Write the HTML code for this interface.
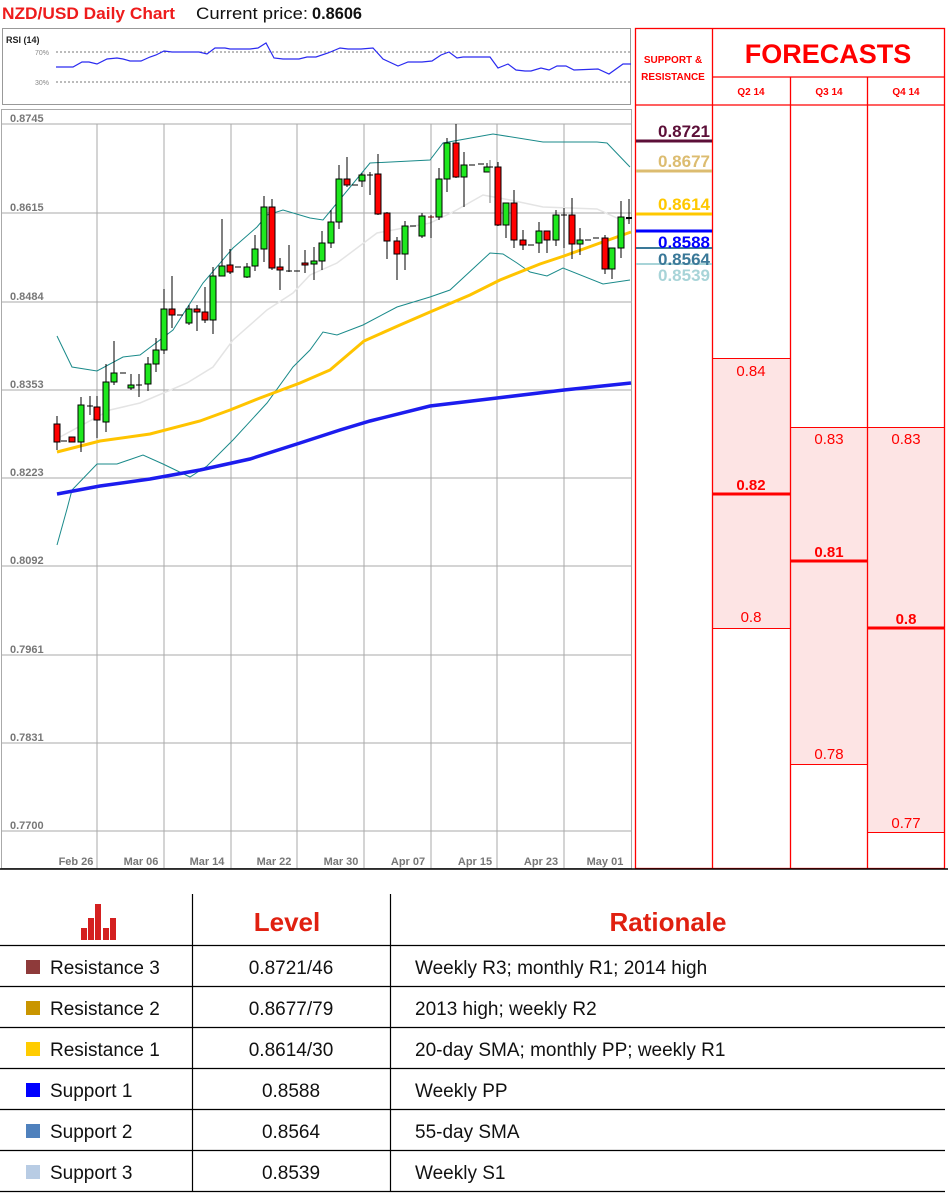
<!DOCTYPE html>
<html><head><meta charset="utf-8"><style>
html,body{margin:0;padding:0;background:#fff}
svg{display:block}
text{font-family:"Liberation Sans",sans-serif}
</style></head><body>
<svg width="948" height="1196" viewBox="0 0 948 1196" xmlns="http://www.w3.org/2000/svg">
<!-- Title -->
<text x="2" y="19" font-size="17" font-weight="bold" fill="#ee1c1c" textLength="173" lengthAdjust="spacingAndGlyphs">NZD/USD Daily Chart</text>
<text x="196" y="19" font-size="17" fill="#111" textLength="112" lengthAdjust="spacingAndGlyphs">Current price:</text>
<text x="312" y="19" font-size="17" font-weight="bold" fill="#111" textLength="50" lengthAdjust="spacingAndGlyphs">0.8606</text>

<!-- RSI box -->
<rect x="2.5" y="28.5" width="628" height="76" fill="#fff" stroke="#999"/>
<text x="6" y="43" font-size="9" font-weight="bold" fill="#222">RSI (14)</text>
<line x1="56" y1="52" x2="630" y2="52" stroke="#777" stroke-dasharray="2,2"/>
<line x1="56" y1="82" x2="630" y2="82" stroke="#777" stroke-dasharray="2,2"/>
<text x="35" y="55" font-size="7" fill="#888">70%</text>
<text x="35" y="85" font-size="7" fill="#888">30%</text>
<polyline fill="none" stroke="#2a2af0" stroke-width="1.2" points="56,67 73,67 82,62 89,62 97,64 107,59 117,58 123,59 130,61 141,61 150,57 156,55 164,51 172,52 189,52 199,52 207,54 215,48 225,48 230,49 250,49 258,48 266,43 274,58 283,59 299,59 307,57 316,57 328,53 340,48 348,49 361,49 373,48 383,59 398,66 408,62 422,62 432,61 441,55 449,52 457,58 463,57 490,57 498,68 508,64 516,70 525,71 531,71 541,68 549,70 557,66 566,66 574,70 598,69 609,74 623,64 631,64"/>

<!-- Main chart -->
<rect x="1.5" y="109.5" width="630" height="759" fill="#fff" stroke="#aaa"/>
<g stroke="#aaa" stroke-width="1">
<line x1="2" y1="124" x2="631" y2="124"/><line x1="2" y1="213" x2="631" y2="213"/><line x1="2" y1="302" x2="631" y2="302"/><line x1="2" y1="390" x2="631" y2="390"/><line x1="2" y1="478" x2="631" y2="478"/><line x1="2" y1="566" x2="631" y2="566"/><line x1="2" y1="655" x2="631" y2="655"/><line x1="2" y1="743" x2="631" y2="743"/><line x1="2" y1="831" x2="631" y2="831"/>
<line x1="97" y1="124" x2="97" y2="868"/><line x1="164" y1="124" x2="164" y2="868"/><line x1="231" y1="124" x2="231" y2="868"/><line x1="297" y1="124" x2="297" y2="868"/><line x1="364" y1="124" x2="364" y2="868"/><line x1="431" y1="124" x2="431" y2="868"/><line x1="497" y1="124" x2="497" y2="868"/><line x1="564" y1="124" x2="564" y2="868"/>
</g>
<g font-size="11" font-weight="bold" fill="#777">
<text x="10" y="122">0.8745</text><text x="10" y="211">0.8615</text><text x="10" y="300">0.8484</text><text x="10" y="388">0.8353</text><text x="10" y="476">0.8223</text><text x="10" y="564">0.8092</text><text x="10" y="653">0.7961</text><text x="10" y="741">0.7831</text><text x="10" y="829">0.7700</text>
</g>
<g font-size="11" font-weight="bold" fill="#777" text-anchor="middle">
<text x="76" y="865">Feb 26</text><text x="141" y="865">Mar 06</text><text x="207" y="865">Mar 14</text><text x="274" y="865">Mar 22</text><text x="341" y="865">Mar 30</text><text x="408" y="865">Apr 07</text><text x="475" y="865">Apr 15</text><text x="541" y="865">Apr 23</text><text x="605" y="865">May 01</text>
</g>

<!-- Indicators -->
<polyline fill="none" stroke="#e4e4e4" stroke-width="1.5" points="60,437 110,410 140,403 187,383 213,367 233,340 267,310 293,293 310,275 337,263 377,233 430,223 453,212 483,195 510,200 543,207 597,209 617,218 630,220"/>
<polyline fill="none" stroke="#1a8a8a" stroke-width="1" points="57,336 72,367 97,371 123,357 140,355 173,330 203,283 233,248 257,227 267,215 283,210 310,218 323,220 370,163 430,160 443,143 493,134 543,142 597,142 607,143 630,167"/>
<polyline fill="none" stroke="#1a8a8a" stroke-width="1" points="57,545 67,509 72,490 97,464 117,464 143,455 163,464 190,477 207,466 233,440 267,403 293,367 310,350 323,332 337,335 363,325 397,307 430,297 450,290 490,253 503,254 517,263 530,272 547,276 563,268 603,284 630,280"/>
<polyline fill="none" stroke="#ffc400" stroke-width="3" points="57,452 100,441 150,434 200,421 230,410 260,398 300,383 330,370 364,341 400,325 430,312 470,295 500,280 540,264 564,256 600,243 631,232"/>
<polyline fill="none" stroke="#1c1cee" stroke-width="3.5" points="57,494 100,486 150,479 200,470 250,459 300,443 340,430 370,421 430,406 497,398 564,390 631,383"/>

<!-- Candles -->
<g stroke="#000" stroke-width="1">
<line x1="57" y1="416" x2="57" y2="450"/><rect x="54" y="424" width="6" height="18" fill="#f00"/>
<line x1="61" y1="441" x2="67" y2="441"/>
<rect x="69" y="437" width="6" height="5" fill="#f00"/>
<line x1="81" y1="397" x2="81" y2="452"/><rect x="78" y="405" width="6" height="37" fill="#1ee81e"/>
<line x1="90" y1="396" x2="90" y2="415"/><line x1="87" y1="406" x2="93" y2="406"/>
<line x1="97" y1="396" x2="97" y2="438"/><rect x="94" y="407" width="6" height="13" fill="#f00"/>
<line x1="106" y1="364" x2="106" y2="432"/><rect x="103" y="382" width="6" height="40" fill="#1ee81e"/>
<line x1="114" y1="341" x2="114" y2="385"/><rect x="111" y="373" width="6" height="9" fill="#1ee81e"/>
<line x1="120" y1="373" x2="126" y2="373"/>
<line x1="131" y1="374" x2="131" y2="390"/><rect x="128" y="385" width="6" height="3" fill="#1ee81e"/>
<line x1="139" y1="374" x2="139" y2="397"/><line x1="136" y1="385" x2="142" y2="385"/>
<line x1="148" y1="357" x2="148" y2="391"/><rect x="145" y="364" width="6" height="20" fill="#1ee81e"/>
<line x1="156" y1="338" x2="156" y2="372"/><rect x="153" y="350" width="6" height="14" fill="#1ee81e"/>
<line x1="164" y1="289" x2="164" y2="354"/><rect x="161" y="309" width="6" height="41" fill="#1ee81e"/>
<line x1="172" y1="276" x2="172" y2="328"/><rect x="169" y="309" width="6" height="6" fill="#f00"/>
<line x1="177" y1="315" x2="183" y2="315"/>
<line x1="189" y1="305" x2="189" y2="325"/><rect x="186" y="309" width="6" height="14" fill="#1ee81e"/>
<line x1="197" y1="305" x2="197" y2="331"/><rect x="194" y="309" width="6" height="3" fill="#f00"/>
<line x1="205" y1="287" x2="205" y2="323"/><rect x="202" y="312" width="6" height="8" fill="#f00"/>
<line x1="213" y1="267" x2="213" y2="334"/><rect x="210" y="276" width="6" height="44" fill="#1ee81e"/>
<line x1="222" y1="219" x2="222" y2="276"/><rect x="219" y="266" width="6" height="10" fill="#1ee81e"/>
<line x1="230" y1="249" x2="230" y2="274"/><rect x="227" y="265" width="6" height="7" fill="#f00"/>
<line x1="235" y1="267" x2="241" y2="267"/>
<line x1="247" y1="263" x2="247" y2="278"/><rect x="244" y="267" width="6" height="10" fill="#1ee81e"/>
<line x1="255" y1="235" x2="255" y2="271"/><rect x="252" y="249" width="6" height="17" fill="#1ee81e"/>
<line x1="264" y1="196" x2="264" y2="262"/><rect x="261" y="207" width="6" height="42" fill="#1ee81e"/>
<line x1="272" y1="199" x2="272" y2="270"/><rect x="269" y="207" width="6" height="61" fill="#f00"/>
<line x1="280" y1="258" x2="280" y2="290"/><rect x="277" y="267" width="6" height="3" fill="#f00"/>
<line x1="289" y1="245" x2="289" y2="272"/><line x1="286" y1="271" x2="292" y2="271"/>
<line x1="294" y1="271" x2="300" y2="271"/>
<line x1="305" y1="250" x2="305" y2="273"/><rect x="302" y="263" width="6" height="2" fill="#f00"/>
<line x1="314" y1="247" x2="314" y2="280"/><rect x="311" y="261" width="6" height="3" fill="#1ee81e"/>
<line x1="322" y1="231" x2="322" y2="270"/><rect x="319" y="243" width="6" height="18" fill="#1ee81e"/>
<line x1="331" y1="210" x2="331" y2="248"/><rect x="328" y="222" width="6" height="21" fill="#1ee81e"/>
<line x1="339" y1="165" x2="339" y2="229"/><rect x="336" y="179" width="6" height="43" fill="#1ee81e"/>
<line x1="347" y1="157" x2="347" y2="187"/><rect x="344" y="179" width="6" height="6" fill="#f00"/>
<line x1="352" y1="185" x2="358" y2="185"/>
<line x1="362" y1="173" x2="362" y2="187"/><rect x="359" y="175" width="6" height="6" fill="#1ee81e"/>
<line x1="370" y1="172" x2="370" y2="195"/><line x1="367" y1="175" x2="373" y2="175"/>
<line x1="378" y1="154" x2="378" y2="215"/><rect x="375" y="174" width="6" height="40" fill="#f00"/>
<line x1="387" y1="212" x2="387" y2="259"/><rect x="384" y="213" width="6" height="28" fill="#f00"/>
<line x1="397" y1="237" x2="397" y2="280"/><rect x="394" y="241" width="6" height="13" fill="#f00"/>
<line x1="405" y1="221" x2="405" y2="270"/><rect x="402" y="226" width="6" height="28" fill="#1ee81e"/>
<line x1="410" y1="226" x2="416" y2="226"/>
<line x1="422" y1="213" x2="422" y2="238"/><rect x="419" y="216" width="6" height="20" fill="#1ee81e"/>
<line x1="431" y1="215" x2="431" y2="238"/><line x1="428" y1="217" x2="434" y2="217" stroke="#700"/>
<line x1="439" y1="168" x2="439" y2="220"/><rect x="436" y="179" width="6" height="38" fill="#1ee81e"/>
<line x1="447" y1="138" x2="447" y2="192"/><rect x="444" y="143" width="6" height="36" fill="#1ee81e"/>
<line x1="456" y1="124" x2="456" y2="178"/><rect x="453" y="143" width="6" height="34" fill="#f00"/>
<line x1="464" y1="152" x2="464" y2="207"/><rect x="461" y="165" width="6" height="12" fill="#1ee81e"/>
<line x1="469" y1="165" x2="475" y2="165"/>
<line x1="478" y1="164" x2="484" y2="164"/>
<line x1="487" y1="163" x2="487" y2="172"/><rect x="484" y="167" width="6" height="5" fill="#1ee81e"/>
<line x1="490" y1="160" x2="490" y2="203" stroke="#777"/><line x1="487" y1="167" x2="493" y2="167"/>
<line x1="498" y1="162" x2="498" y2="226"/><rect x="495" y="167" width="6" height="58" fill="#f00"/>
<line x1="506" y1="203" x2="506" y2="238"/><rect x="503" y="203" width="6" height="22" fill="#1ee81e"/>
<line x1="514" y1="190" x2="514" y2="248"/><rect x="511" y="203" width="6" height="37" fill="#f00"/>
<line x1="523" y1="230" x2="523" y2="250"/><rect x="520" y="240" width="6" height="5" fill="#f00"/>
<line x1="528" y1="245" x2="534" y2="245"/>
<line x1="539" y1="222" x2="539" y2="253"/><rect x="536" y="231" width="6" height="12" fill="#1ee81e"/>
<line x1="547" y1="231" x2="547" y2="253"/><rect x="544" y="231" width="6" height="9" fill="#f00"/>
<line x1="556" y1="210" x2="556" y2="246"/><rect x="553" y="215" width="6" height="25" fill="#1ee81e"/>
<line x1="564" y1="208" x2="564" y2="248"/><line x1="561" y1="215" x2="567" y2="215"/>
<line x1="572" y1="198" x2="572" y2="259"/><rect x="569" y="215" width="6" height="29" fill="#f00"/>
<line x1="580" y1="228" x2="580" y2="255"/><rect x="577" y="240" width="6" height="4" fill="#1ee81e"/>
<line x1="585" y1="240" x2="591" y2="240"/>
<line x1="593" y1="238" x2="599" y2="238"/>
<line x1="605" y1="235" x2="605" y2="274"/><rect x="602" y="238" width="6" height="31" fill="#f00"/>
<line x1="612" y1="248" x2="612" y2="279"/><rect x="609" y="248" width="6" height="21" fill="#1ee81e"/>
<line x1="621" y1="201" x2="621" y2="258"/><rect x="618" y="217" width="6" height="31" fill="#1ee81e"/>
<line x1="629" y1="199" x2="629" y2="224"/><line x1="626" y1="218" x2="632" y2="218" stroke-width="2"/>
</g>

<!-- Right panel -->
<g fill="#fde4e4" stroke="#f00" stroke-width="1">
<rect x="712.5" y="358.5" width="78" height="270"/>
<rect x="790.5" y="427.5" width="77" height="337"/>
<rect x="867.5" y="427.5" width="77" height="405"/>
</g>
<g stroke="#f00" stroke-width="1.3" fill="none">
<rect x="635.5" y="28.5" width="309" height="840"/>
<line x1="712.5" y1="28" x2="712.5" y2="868"/>
<line x1="790.5" y1="77" x2="790.5" y2="868"/>
<line x1="867.5" y1="77" x2="867.5" y2="868"/>
<line x1="712" y1="77" x2="945" y2="77"/>
<line x1="635" y1="105" x2="945" y2="105"/>
</g>
<g stroke="#f00" stroke-width="3">
<line x1="713" y1="494" x2="790" y2="494"/>
<line x1="791" y1="561" x2="867" y2="561"/>
<line x1="868" y1="628" x2="944" y2="628"/>
</g>
<text x="828" y="63" font-size="27" font-weight="bold" fill="#f00" text-anchor="middle">FORECASTS</text>
<text x="673" y="63" font-size="10" font-weight="bold" fill="#f00" text-anchor="middle">SUPPORT &amp;</text>
<text x="673" y="80" font-size="10" font-weight="bold" fill="#f00" text-anchor="middle">RESISTANCE</text>
<g font-size="10" font-weight="bold" fill="#f00" text-anchor="middle">
<text x="751" y="95">Q2 14</text><text x="829" y="95">Q3 14</text><text x="906" y="95">Q4 14</text>
</g>
<g font-size="15" fill="#f00" text-anchor="middle">
<text x="751" y="376">0.84</text><text x="751" y="622">0.8</text>
<text x="829" y="444">0.83</text><text x="829" y="759">0.78</text>
<text x="906" y="444">0.83</text><text x="906" y="828">0.77</text>
</g>
<g font-size="15" font-weight="bold" fill="#f00" text-anchor="middle">
<text x="751" y="490">0.82</text><text x="829" y="557">0.81</text><text x="906" y="624">0.8</text>
</g>
<!-- S&R levels -->
<g stroke-width="3">
<line x1="636" y1="141" x2="712" y2="141" stroke="#5c0f38"/>
<line x1="636" y1="171" x2="712" y2="171" stroke="#dcbc70"/>
<line x1="636" y1="214" x2="712" y2="214" stroke="#ffc800"/>
<line x1="636" y1="231" x2="712" y2="231" stroke="#0000ff"/>
<line x1="636" y1="248" x2="712" y2="248" stroke="#3a7898" stroke-width="2"/>
<line x1="636" y1="264" x2="712" y2="264" stroke="#a8d4d8" stroke-width="2"/>
</g>
<g font-size="17" font-weight="bold" text-anchor="end">
<text x="710" y="137" fill="#5c0f38">0.8721</text>
<text x="710" y="167" fill="#dcbc70">0.8677</text>
<text x="710" y="210" fill="#ffc800">0.8614</text>
<text x="710" y="248" fill="#0000ff">0.8588</text>
<text x="710" y="265" fill="#3a7898">0.8564</text>
<text x="710" y="281" fill="#a8d4d8">0.8539</text>
</g>
<line x1="0" y1="869" x2="948" y2="869" stroke="#000" stroke-width="1.5"/>

<!-- Table -->
<g fill="#d42020">
<rect x="81" y="928" width="6" height="12"/><rect x="88" y="918" width="6" height="22"/><rect x="95" y="904" width="6" height="36"/><rect x="103" y="928" width="6" height="12"/><rect x="110" y="918" width="6" height="22"/>
</g>
<text x="287" y="931" font-size="26" font-weight="bold" fill="#e02010" text-anchor="middle">Level</text>
<text x="668" y="931" font-size="26" font-weight="bold" fill="#e02010" text-anchor="middle">Rationale</text>
<g stroke="#000" stroke-width="1.2">
<line x1="192.5" y1="894" x2="192.5" y2="1192"/>
<line x1="390.5" y1="894" x2="390.5" y2="1192"/>
<line x1="0" y1="945.5" x2="945" y2="945.5"/>
<line x1="0" y1="986.5" x2="945" y2="986.5"/>
<line x1="0" y1="1027.5" x2="945" y2="1027.5"/>
<line x1="0" y1="1068.5" x2="945" y2="1068.5"/>
<line x1="0" y1="1109.5" x2="945" y2="1109.5"/>
<line x1="0" y1="1150.5" x2="945" y2="1150.5"/>
<line x1="0" y1="1191.5" x2="945" y2="1191.5"/>
</g>
<rect x="26" y="960" width="14" height="14" fill="#8e3a3a"/>
<rect x="26" y="1001" width="14" height="14" fill="#c99500"/>
<rect x="26" y="1042" width="14" height="14" fill="#ffcc00"/>
<rect x="26" y="1083" width="14" height="14" fill="#0000ff"/>
<rect x="26" y="1124" width="14" height="14" fill="#4f81bd"/>
<rect x="26" y="1165" width="14" height="14" fill="#b8cce4"/>
<g font-size="19" fill="#111">
<text x="50" y="974">Resistance 3</text>
<text x="50" y="1015">Resistance 2</text>
<text x="50" y="1056">Resistance 1</text>
<text x="50" y="1097">Support 1</text>
<text x="50" y="1138">Support 2</text>
<text x="50" y="1179">Support 3</text>
</g>
<g font-size="19" fill="#111" text-anchor="middle">
<text x="291" y="974">0.8721/46</text>
<text x="291" y="1015">0.8677/79</text>
<text x="291" y="1056">0.8614/30</text>
<text x="291" y="1097">0.8588</text>
<text x="291" y="1138">0.8564</text>
<text x="291" y="1179">0.8539</text>
</g>
<g font-size="19" fill="#111">
<text x="415" y="974">Weekly R3; monthly R1; 2014 high</text>
<text x="415" y="1015">2013 high; weekly R2</text>
<text x="415" y="1056">20-day SMA; monthly PP; weekly R1</text>
<text x="415" y="1097">Weekly PP</text>
<text x="415" y="1138">55-day SMA</text>
<text x="415" y="1179">Weekly S1</text>
</g>
</svg>
</body></html>
